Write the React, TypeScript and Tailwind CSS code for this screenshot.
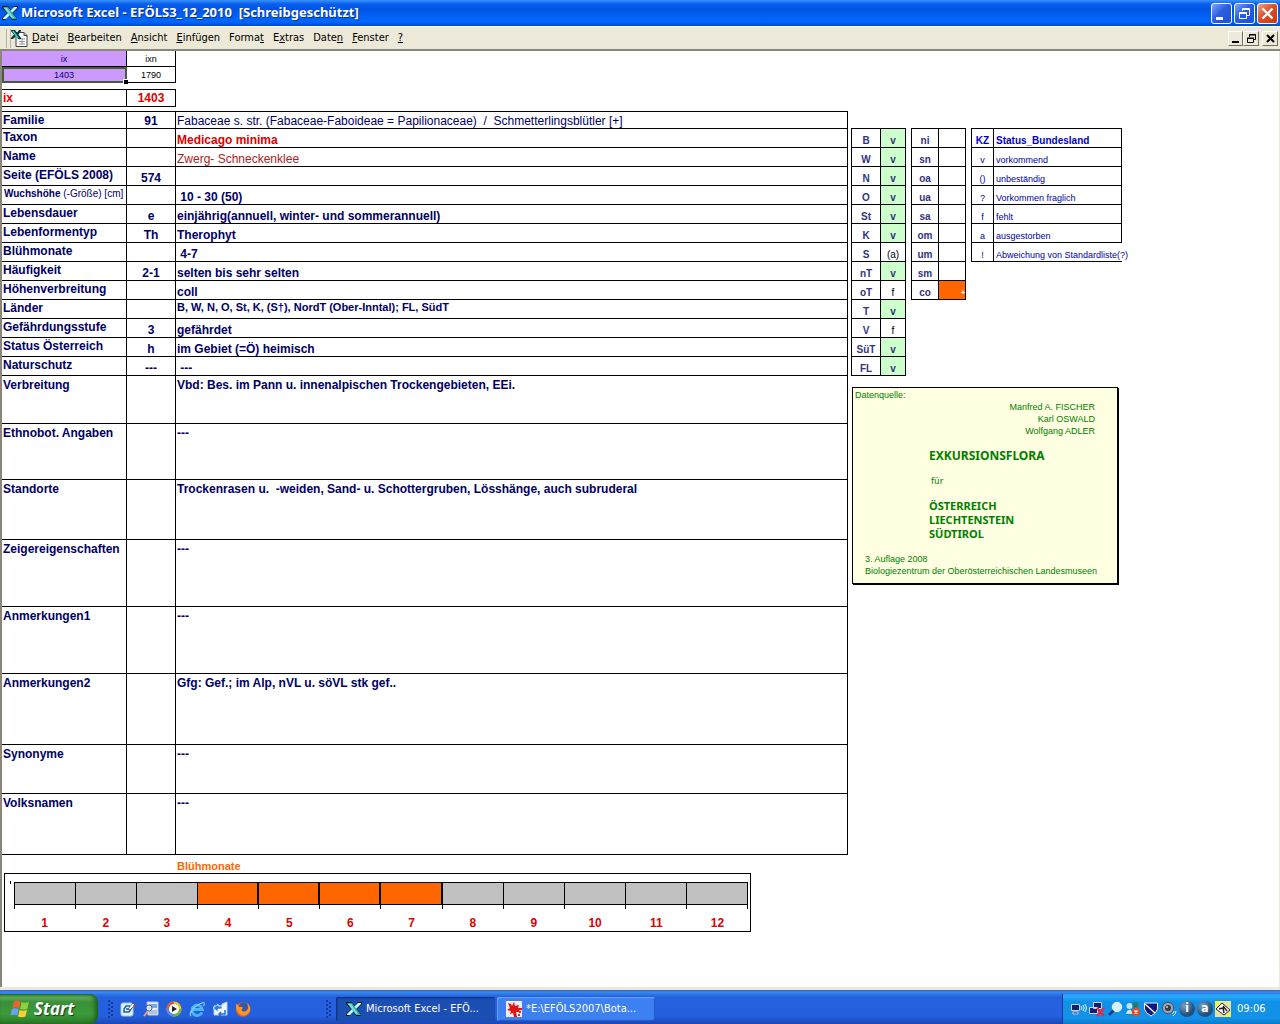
import React from "react";

type Field = {
  label: string;
  code?: string;
  value: string;
  height: string;
  valueClass?: string;
};

const fields: Field[] = [
  {
    label: "Familie",
    code: "91",
    value:
      "Fabaceae s. str. (Fabaceae-Faboideae = Papilionaceae)  /  Schmetterlingsblütler [+]",
    height: "h-[17px]",
    valueClass: "font-normal",
  },
  {
    label: "Taxon",
    value: "Medicago minima",
    height: "h-[19px]",
    valueClass: "text-[#e00000]",
  },
  {
    label: "Name",
    value: "Zwerg- Schneckenklee",
    height: "h-[19px]",
    valueClass: "font-normal text-[#b02020]",
  },
  { label: "Seite (EFÖLS 2008)", code: "574", value: "", height: "h-[19px]" },
  { label: "Wuchshöhe", value: " 10 - 30 (50)", height: "h-[19px]" },
  {
    label: "Lebensdauer",
    code: "e",
    value: "einjährig(annuell, winter- und sommerannuell)",
    height: "h-[19px]",
  },
  { label: "Lebenformentyp", code: "Th", value: "Therophyt", height: "h-[19px]" },
  { label: "Blühmonate", value: " 4-7", height: "h-[19px]" },
  {
    label: "Häufigkeit",
    code: "2-1",
    value: "selten bis sehr selten",
    height: "h-[19px]",
  },
  { label: "Höhenverbreitung", value: "coll", height: "h-[19px]" },
  {
    label: "Länder",
    value: "B, W, N, O, St, K, (S†), NordT (Ober-Inntal); FL, SüdT",
    height: "h-[19px]",
    valueClass: "text-[11px] align-top",
  },
  { label: "Gefährdungsstufe", code: "3", value: "gefährdet", height: "h-[19px]" },
  {
    label: "Status Österreich",
    code: "h",
    value: "im Gebiet (=Ö) heimisch",
    height: "h-[19px]",
  },
  { label: "Naturschutz", code: "---", value: " ---", height: "h-[19px]" },
];

const notes: Field[] = [
  {
    label: "Verbreitung",
    value: "Vbd: Bes. im Pann u. innenalpischen Trockengebieten, EEi.",
    height: "h-[48px]",
  },
  { label: "Ethnobot. Angaben", value: "---", height: "h-[56px]" },
  {
    label: "Standorte",
    value:
      "Trockenrasen u.  -weiden, Sand- u. Schottergruben, Lösshänge, auch subruderal",
    height: "h-[60px]",
  },
  { label: "Zeigereigenschaften", value: "---", height: "h-[67px]" },
  { label: "Anmerkungen1", value: "---", height: "h-[67px]" },
  {
    label: "Anmerkungen2",
    value: "Gfg: Gef.; im Alp, nVL u. söVL stk gef..",
    height: "h-[71px]",
  },
  { label: "Synonyme", value: "---", height: "h-[49px]" },
  { label: "Volksnamen", value: "---", height: "h-[61px]" },
];

const states = [
  ["B", "v"],
  ["W", "v"],
  ["N", "v"],
  ["O", "v"],
  ["St", "v"],
  ["K", "v"],
  ["S", "(a)"],
  ["nT", "v"],
  ["oT", "f"],
  ["T", "v"],
  ["V", "f"],
  ["SüT", "v"],
  ["FL", "v"],
];

const levels = ["ni", "sn", "oa", "ua", "sa", "om", "um", "sm", "co"];

const legend = [
  ["v", "vorkommend"],
  ["()", "unbeständig"],
  ["?", "Vorkommen fraglich"],
  ["f", "fehlt"],
  ["a", "ausgestorben"],
  ["!", "Abweichung von Standardliste(?)"],
];

const months = [1, 2, 3, 4, 5, 6, 7, 8, 9, 10, 11, 12];

const menus = [
  ["", "D", "atei"],
  ["", "B", "earbeiten"],
  ["", "A", "nsicht"],
  ["", "E", "infügen"],
  ["Forma", "t", ""],
  ["E", "x", "tras"],
  ["Date", "n", ""],
  ["", "F", "enster"],
  ["", "?", ""],
];

const ExcelIcon = () => (
  <svg width="16" height="16" viewBox="0 0 16 16" className="shrink-0">
    <path d="M0 1h6l3 4 3-4h4v2l-5 5 4 5v2h-5l-3-4-4 4H0v-2l5-5-5-5z" fill="#001c1c" />
    <path d="M12 2h3v1L4 14H1v-1z" fill="#c8f6f2" />
    <path d="M1 2h5l9 12h-5z" fill="#2fb0ac" />
    <path d="M2 3h3l7 10h-2z" fill="#7fe0da" />
  </svg>
);

const SheetIcon = () => (
  <svg width="17" height="17" viewBox="0 0 17 17" className="shrink-0">
    <path d="M5 2.500h8l3 3v11H5z" fill="#fff" stroke="#404040" />
    <path d="M13 2.500v3h3" fill="#ccc" stroke="#404040" />
    <path d="M8 9h6M8 11.500h6M8 14h6M11 8v7" stroke="#9a9a9a" />
    <path d="M0 0h4l2 3 2-3h2v1L7.500 4.500 10 8v1H7L5 6 2 9H0V8l3-3.500L0 1z" fill="#003c3c" />
    <path d="M1 1h2l5 7H6z" fill="#3cc6c0" />
  </svg>
);

const Minimize = () => (
  <svg width="19" height="19" viewBox="0 0 19 19">
    <path d="M4 13h7v3H4z" fill="#fff" />
  </svg>
);

const Restore = () => (
  <svg width="19" height="19" viewBox="0 0 19 19" fill="none" stroke="#fff">
    <path d="M7.500 7V4.500h7v7H12M7 5.500h8" />
    <path d="M4.500 8.500h7v6h-7zM4 9.500h8" />
  </svg>
);

const Close = () => (
  <svg width="19" height="19" viewBox="0 0 19 19" fill="none" stroke="#fff" strokeWidth="2.400">
    <path d="m4.500 4.500 10 10m0-10-10 10" />
  </svg>
);

const captionButton =
  "w-[21px] h-[21px] rounded-[3px] border border-white flex items-center justify-center overflow-hidden";
const childButton =
  "h-[15px] bg-[#ece9d8] border border-t-white border-l-white border-r-[#716f64] border-b-[#716f64] flex items-center justify-center";

const TitleBar = () => (
  <header className="h-[26px] shrink-0 flex items-center px-[2px] bg-[linear-gradient(180deg,#3a93ff_0px,#0a5fee_4px,#0054e3_9px,#0063f8_18px,#0066ff_22px,#0046c8_26px)]">
    <ExcelIcon />
    <h1 className="flex-1 ml-[3px] whitespace-pre text-white font-bold text-[13px] font-['Noto_Sans','Open_Sans',sans-serif] [text-shadow:1px_1px_0_#0a2f8f]">
      {"Microsoft Excel - EFÖLS3_12_2010  [Schreibgeschützt]"}
    </h1>
    <div className="flex gap-[2px]">
      <button
        aria-label="Minimieren"
        className={`${captionButton} bg-[linear-gradient(135deg,#7fa4f5,#2a5fe0_45%,#1c4fd8)]`}
      >
        <Minimize />
      </button>
      <button
        aria-label="Verkleinern"
        className={`${captionButton} bg-[linear-gradient(135deg,#7fa4f5,#2a5fe0_45%,#1c4fd8)]`}
      >
        <Restore />
      </button>
      <button
        aria-label="Schließen"
        className={`${captionButton} bg-[linear-gradient(135deg,#f0a58c,#dd4f2a_45%,#c8370f)]`}
      >
        <Close />
      </button>
    </div>
  </header>
);

const MenuBar = () => (
  <nav className="h-[25px] shrink-0 flex items-center pl-[6px] pr-[2px] bg-[#ece9d8] border-t border-t-white border-b-2 border-b-[#8a877a]">
    <div className="w-[5px] h-[19px] border-l border-r border-[#b5b2a0]" />
    <div className="mr-[4px]">
      <SheetIcon />
    </div>
    <div className="flex-1 flex gap-[9px] text-[11px] text-black font-['DejaVu_Sans_Condensed','Noto_Sans',sans-serif]">
      {menus.map(([before, key, after]) => (
        <button key={before + key + after}>
          {before}
          <span className="underline">{key}</span>
          {after}
        </button>
      ))}
    </div>
    <div className="flex">
      <button aria-label="Mappe minimieren" className={`${childButton} w-[15px]`}>
        <svg width="11" height="11" viewBox="0 0 11 11">
          <path d="M2 8h7v2H2z" />
        </svg>
      </button>
      <button aria-label="Mappe verkleinern" className={`${childButton} w-[16px]`}>
        <svg width="11" height="11" viewBox="0 0 11 11" fill="none" stroke="#000">
          <path d="M3.500 4V1.500h6v5H8M3 2h7M1.500 5.500h6v4h-6zM1 5h7" />
        </svg>
      </button>
      <button aria-label="Mappe schließen" className={`${childButton} w-[16px] ml-[3px]`}>
        <svg width="11" height="11" viewBox="0 0 11 11" stroke="#000" strokeWidth="2">
          <path d="m2 2 7 7m0-7L2 9" />
        </svg>
      </button>
    </div>
  </nav>
);

const IndexTables = () => (
  <>
    <table className="table-fixed border-separate border-spacing-0 w-[174px] text-[9px] leading-[10px] text-center">
      <colgroup>
        <col className="w-[125px]" />
        <col className="w-[49px]" />
      </colgroup>
      <tbody>
        <tr className="h-[16px]">
          <td className="p-0 bg-[#cc99ff] text-[#000080] border-r border-b border-black">ix</td>
          <td className="p-0 border-r border-b border-black">ixn</td>
        </tr>
        <tr className="h-[16px]">
          <td className="relative p-0 bg-[#cc99ff] text-[#000080] border-r border-b border-black outline-2 -outline-offset-2 outline-[#4a5a3c]">
            1403
            <span className="absolute right-[-2px] bottom-[-2px] w-[5px] h-[5px] bg-black border-t border-l border-white" />
          </td>
          <td className="p-0 border-r border-b border-black">1790</td>
        </tr>
      </tbody>
    </table>
    <table className="mt-[6px] table-fixed border-separate border-spacing-0 w-[174px] text-[#e00000] font-bold leading-[14px]">
      <colgroup>
        <col className="w-[125px]" />
        <col className="w-[49px]" />
      </colgroup>
      <tbody>
        <tr className="h-[18px]">
          <th scope="row" className="p-0 pl-px text-left text-[12px] border border-l-0 border-black">
            ix
          </th>
          <td className="p-0 text-center text-[12px] border border-l-0 border-black">1403</td>
        </tr>
      </tbody>
    </table>
  </>
);

const TaxonTable = () => (
  <table className="mt-[4px] w-full table-fixed border-separate border-spacing-0 border-t border-black text-[12px] leading-[14px] font-bold text-[#000066]">
    <colgroup>
      <col className="w-[125px]" />
      <col className="w-[49px]" />
      <col />
    </colgroup>
    <tbody>
      {fields.map((f) => (
        <tr key={f.label} className={f.height}>
          <th
            scope="row"
            className="p-0 pt-px pl-px text-left align-top whitespace-nowrap border-r border-b border-black"
          >
            {f.label === "Wuchshöhe" ? (
              <span className="block pl-px text-[10px]">
                {f.label} <span className="font-normal">(-Größe) [cm]</span>
              </span>
            ) : (
              f.label
            )}
          </th>
          <td className="p-0 text-center align-bottom border-r border-b border-black">
            {f.code}
          </td>
          <td
            className={`p-0 pl-px align-bottom whitespace-pre border-r border-b border-black ${
              f.valueClass ?? ""
            }`}
          >
            {f.value}
          </td>
        </tr>
      ))}
      {notes.map((n) => (
        <tr key={n.label} className={n.height}>
          <th
            scope="row"
            className="p-0 pt-[2px] pl-px text-left align-top whitespace-nowrap border-r border-b border-black"
          >
            {n.label}
          </th>
          <td className="p-0 border-r border-b border-black" />
          <td className="p-0 pt-[2px] pl-px align-top whitespace-pre border-r border-b border-black">
            {n.value}
          </td>
        </tr>
      ))}
    </tbody>
  </table>
);

const MonthChart = () => (
  <section>
    <h2 className="mt-[4px] pl-[175px] text-[11px] leading-[14px] font-bold text-[#ff6600]">
      Blühmonate
    </h2>
    <div className="relative ml-[2px] max-w-[747px] h-[59px] border border-black pt-[8px] pl-[9px] pr-[2px]">
      <span className="absolute left-[5px] top-[7px] w-px h-[3px] bg-black" />
      <div className="grid grid-cols-12 border-r border-black">
        {months.map((m) => (
          <div
            key={m}
            className={`h-[23px] border-t border-b border-l border-black ${
              m >= 4 && m <= 7 ? "bg-[#ff6600]" : "bg-[#c0c0c0]"
            } ${m >= 4 && m <= 7 ? "border-r" : ""}`}
          />
        ))}
      </div>
      <div className="grid grid-cols-12 border-r border-black h-[4px]">
        {months.map((m) => (
          <div key={m} className="border-l border-black" />
        ))}
      </div>
      <div className="grid grid-cols-12 mt-[7px] text-center text-[12px] leading-[14px] font-bold text-[#e00000]">
        {months.map((m) => (
          <div key={m}>{m}</div>
        ))}
      </div>
    </div>
  </section>
);

const StatusTables = () => (
  <div className="flex items-start gap-[5px] text-[10px] leading-[12px]">
    <table className="table-fixed border-separate border-spacing-0 border-t border-l border-black w-[55px] text-center font-bold text-[#333380]">
      <colgroup>
        <col className="w-[29px]" />
        <col className="w-[25px]" />
      </colgroup>
      <tbody>
        {states.map(([name, value]) => (
          <tr key={name} className="h-[19px]">
            <th scope="row" className="p-0 align-bottom border-r border-b border-black">
              {name}
            </th>
            <td
              className={`p-0 align-bottom border-r border-b border-black ${
                value === "v" ? "bg-[#ccffcc]" : "font-normal text-black"
              }`}
            >
              {value}
            </td>
          </tr>
        ))}
      </tbody>
    </table>

    <table className="table-fixed border-separate border-spacing-0 border-t border-l border-black w-[55px] text-center font-bold text-[#333380]">
      <colgroup>
        <col className="w-[27px]" />
        <col className="w-[27px]" />
      </colgroup>
      <tbody>
        {levels.map((level) => (
          <tr key={level} className="h-[19px]">
            <th scope="row" className="p-0 align-bottom border-r border-b border-black">
              {level}
            </th>
            <td
              className={`p-0 align-bottom border-r border-b border-black ${
                level === "co" ? "bg-[#ff6600] text-right text-[7px] text-white" : ""
              }`}
            >
              {level === "co" ? "+" : ""}
            </td>
          </tr>
        ))}
      </tbody>
    </table>

    <table className="table-fixed border-separate border-spacing-0 border-t border-l border-black w-[151px] text-[#0000aa]">
      <colgroup>
        <col className="w-[22px]" />
        <col className="w-[128px]" />
      </colgroup>
      <thead>
        <tr className="h-[19px] text-[#0000cc]">
          <th className="p-0 align-bottom border-r border-b border-black">KZ</th>
          <th className="p-0 pl-[2px] text-left align-bottom border-r border-b border-black">
            Status_Bundesland
          </th>
        </tr>
      </thead>
      <tbody>
        {legend.map(([sign, text]) => (
          <tr key={sign} className="h-[19px] text-[9px]">
            <td className="p-0 text-center align-bottom border-r border-b border-black">{sign}</td>
            <td
              className={`p-0 pl-[2px] align-bottom whitespace-nowrap border-b border-black ${
                sign === "!" ? "" : "border-r"
              }`}
            >
              {text}
            </td>
          </tr>
        ))}
      </tbody>
    </table>
  </div>
);

const SourceBox = () => (
  <aside className="mt-[11px] ml-px w-[266px] h-[197px] bg-[#ffffe1] border border-black shadow-[1px_1px_0_#000] text-[#008000] text-[9px] leading-[12px] pt-px">
    <p className="pl-[2px]">Datenquelle:</p>
    <p className="pr-[22px] text-right">
      Manfred A. FISCHER
      <br />
      Karl OSWALD
      <br />
      Wolfgang ADLER
    </p>
    <div className="pl-[76px] font-['Noto_Sans','Open_Sans',sans-serif] font-bold text-[11px] leading-[14px]">
      <p className="mt-[12px] text-[12px]">EXKURSIONSFLORA</p>
      <p className="my-[12px] pl-[2px] font-normal text-[9px] leading-[12px]">für</p>
      <p>
        ÖSTERREICH
        <br />
        LIECHTENSTEIN
        <br />
        SÜDTIROL
      </p>
    </div>
    <p className="mt-[12px] pl-[12px] whitespace-nowrap">
      3. Auflage 2008
      <br />
      Biologiezentrum der Oberösterreichischen Landesmuseen
    </p>
  </aside>
);

const Grip = () => (
  <svg width="6" height="20" viewBox="0 0 6 20" fill="#123a9c" className="shrink-0">
    <path d="M0 1h2v2H0zM0 5h2v2H0zM0 9h2v2H0zM0 13h2v2H0zM0 17h2v2H0zM3 3h2v2H3zM3 7h2v2H3zM3 11h2v2H3zM3 15h2v2H3z" />
  </svg>
);

const WindowsFlag = () => (
  <svg width="20" height="20" viewBox="0 0 20 20" className="shrink-0">
    <path d="M4 2.500q3-2 6.500 0L9 9Q5.500 7.500 2.300 9z" fill="#f0622c" />
    <path d="M11.500 3q3 1.500 7.500 0L17.200 10q-3.500 1-7.200 0z" fill="#8cd03c" />
    <path d="M2 10q3-1.500 6.700 0l-1.500 6.500q-3-1.500-6.700 0z" fill="#6ba0f8" />
    <path d="M9.600 11q3.500 1.500 7.400 0l-1.600 6.500q-4 1.500-7.400 0z" fill="#ffd034" />
  </svg>
);

const quickIcons = [
  {
    title: "Desktop anzeigen",
    icon: (
      <>
        <rect x="1" y="2" width="12" height="13" rx="2" fill="#e4f4ff" stroke="#9accf4" />
        <path d="M10 5H6L4 8v3h5l2-3H6" fill="none" stroke="#1f5fa8" strokeWidth="1.500" />
        <path d="m8 8 5-6 2 2-5 5z" fill="#fff" stroke="#1c3f7c" strokeWidth=".7" />
        <circle cx="14.500" cy="5" r="1.300" fill="#c0401c" />
      </>
    ),
  },
  {
    title: "Suche",
    icon: (
      <>
        <path d="M4 1h11v13H5z" fill="#e8eef8" stroke="#b8c4dc" />
        <path d="M6 3h8v4H6z" fill="#78a8ec" />
        <path d="M6 10h8M6 12h8" stroke="#7f98c8" />
        <circle cx="6" cy="7" r="3" fill="#cfe6ff" stroke="#5a6a90" />
        <path d="m5 10-4 5" stroke="#f0a070" strokeWidth="2" />
      </>
    ),
  },
  {
    title: "Media Player",
    icon: (
      <>
        <circle cx="8" cy="8" r="7.500" fill="#f6c21c" />
        <path d="M8 8V.5A7.500 7.500 0 0 0 .5 8z" fill="#e8582c" />
        <path d="M8 8H.5A7.500 7.500 0 0 0 8 15.500z" fill="#4c8ce8" />
        <path d="M8 8v7.500A7.500 7.500 0 0 0 15.500 8z" fill="#68b83c" />
        <circle cx="8" cy="8" r="5" fill="#fff" />
        <path d="M6 5v6l5-3z" fill="#222" />
      </>
    ),
  },
  {
    title: "Internet Explorer",
    icon: (
      <>
        <path d="M13 11.500A5.200 5.200 0 1 1 13.400 8.500H4" fill="none" stroke="#4cb8fc" strokeWidth="2.800" />
        <path d="M2 15C-1 12 6 4 14 1.500c2 0 1.500 2 .5 3.500" fill="none" stroke="#8cd0ff" strokeWidth="1.200" />
      </>
    ),
  },
  {
    title: "Outlook",
    icon: (
      <>
        <path d="M2 5h8V3l5-2v13H2z" fill="#f2f8ff" stroke="#b0ccf0" />
        <path d="M1 7 6 3v2h4v3H6v3z" fill="#2c80dc" stroke="#fff" strokeWidth=".7" />
        <path d="M13 9v4H7M9 11l-2 2 2 2" fill="none" stroke="#2c70c8" strokeWidth="1.500" />
      </>
    ),
  },
  {
    title: "Firefox",
    icon: (
      <>
        <circle cx="8" cy="8.500" r="7.300" fill="#e0601c" />
        <circle cx="8.500" cy="6" r="4.500" fill="#3458a8" />
        <path d="M1 3q2 0 3 3 3-1 4 1-2 1-1 3 4 2 6-2 1-3-1-6 4 3 3 8-4 6-9 4-6-4-5-11z" fill="#f8962c" />
      </>
    ),
  },
];

const trayIcons = [
  {
    title: "Drahtlos",
    icon: (
      <>
        <path d="M.5 3.500h8v6h-8zM2 11h5v2H2z" fill="#14206c" stroke="#c8d4ec" />
        <path d="M10 5q2 2 0 4M12 4q2.500 3 0 6M14 3q3 4 0 8" fill="none" stroke="#dff0ff" />
      </>
    ),
  },
  {
    title: "Netzwerk getrennt",
    icon: (
      <>
        <path d="M4.500 1.500h8v6h-8zM.5 6.500h8v6h-8z" fill="#14206c" stroke="#c8d4ec" />
        <path d="m8 7 7 8m0-8-7 8" stroke="#e8283c" strokeWidth="2.200" />
      </>
    ),
  },
  {
    title: "Lupe",
    icon: (
      <>
        <path d="m7 9-5 5" stroke="#203a80" strokeWidth="2.500" />
        <circle cx="10" cy="6" r="4.700" fill="#d4f0ff" stroke="#f4faff" />
      </>
    ),
  },
  {
    title: "Messenger",
    icon: (
      <>
        <circle cx="4.500" cy="5" r="3" fill="#bfe4f0" />
        <circle cx="10.500" cy="4" r="3" fill="#208068" />
        <path d="M1 14q1-8 6-5l5-3 3 5v3z" fill="#287f86" />
        <path d="M1 13q1-5 5-4l2 4z" fill="#c4e8f0" />
        <circle cx="11" cy="11" r="4.200" fill="#e04c28" />
        <path d="m9.500 9.500 3 3m0-3-3 3" stroke="#fff" strokeWidth="1.400" />
      </>
    ),
  },
  {
    title: "Virenschutz",
    icon: (
      <>
        <path d="M1.500 2h13v6q-1 4-6.500 7-5.500-3-6.500-7z" fill="#10187c" stroke="#e8f0ff" />
        <path d="m2 3 10 9" stroke="#fff" strokeWidth="1.300" />
      </>
    ),
  },
  {
    title: "Lautstärke",
    icon: (
      <>
        <circle cx="7" cy="7" r="5.700" fill="#9aa4b4" stroke="#46505e" />
        <circle cx="7" cy="7" r="3" fill="#343c48" />
        <circle cx="6" cy="6" r="1" fill="#c8d0dc" />
        <path d="M11 13q2-1 2-3M12 15q3-2 3-5" fill="none" stroke="#dff0ff" />
      </>
    ),
  },
];

const TrayBadge = ({ letter }: { letter: string }) => (
  <span className="w-[16px] h-[16px] rounded-full bg-[radial-gradient(circle_at_35%_30%,#7fa0c0,#24507c_60%)] text-white text-[12px] leading-[15px] font-bold text-center">
    {letter}
  </span>
);

const Taskbar = () => (
  <footer className="h-[34px] shrink-0 flex items-stretch text-white text-[11px] font-['DejaVu_Sans_Condensed','Noto_Sans',sans-serif] bg-[linear-gradient(180deg,#2a62c8_0px,#3b8bf0_2px,#2f79e6_4px,#2560dc_7px,#2460de_26px,#1c46b4_34px)]">
    <button className="mt-[4px] w-[98px] shrink-0 flex items-center pl-[10px] gap-[4px] rounded-r-[8px] bg-[linear-gradient(180deg,#2c7c2c_0px,#5fae5c_3px,#3c8f3a_8px,#3a9a38_20px,#2c7a2a_30px)] shadow-[inset_-3px_0_4px_#1f5f1f]">
      <WindowsFlag />
      <span className="italic font-bold text-[17px] leading-[20px] font-['Open_Sans','Noto_Sans',sans-serif] [text-shadow:1px_1px_1px_#1c3c1c]">
        Start
      </span>
    </button>
    <div className="flex items-center pt-[4px] pl-[10px]">
      <Grip />
      <div className="flex gap-[7px] ml-[6px] w-[206px]">
        {quickIcons.map((q) => (
          <button key={q.title} title={q.title}>
            <svg width="16" height="16" viewBox="0 0 16 16">
              {q.icon}
            </svg>
          </button>
        ))}
      </div>
      <Grip />
    </div>
    <div className="flex-1 flex gap-[2px] pl-[4px] pt-[7px] pb-[3px]">
      <button className="w-[159px] flex items-center gap-[4px] pl-[10px] rounded-[2px] bg-[#1c4fb4] shadow-[inset_1px_1px_2px_#0c2c7c]">
        <ExcelIcon />
        Microsoft Excel - EFÖ...
      </button>
      <button className="w-[158px] flex items-center gap-[4px] pl-[9px] rounded-[2px] bg-[#3c80f2] shadow-[inset_1px_1px_1px_#6ea4ff,inset_-1px_-1px_1px_#2458c0]">
        <svg width="16" height="16" viewBox="0 0 16 16" className="shrink-0">
          <path d="M0 0h16v16H0z" fill="#f4ecec" />
          <path d="M2 2l3 1 1 2 2-4 1 4 4-1-1 3h4v2h-3l2 3-3-1-2 0 1 5H8l-1-4-3 1 1-3-4-1 3-2z" fill="#e01414" />
          <path d="M13 10h2v2h-2zM12 13h2v2h-2z" fill="#d83030" />
        </svg>
        *E:\EFÖLS2007\Bota...
      </button>
    </div>
    <div className="mt-[4px] w-[218px] shrink-0 flex items-center gap-[2px] pl-[8px] border-l border-[#0c3c9c] bg-[linear-gradient(180deg,#1c9cf0_0px,#2aa8f8_2px,#1290e8_8px,#1292ea_24px,#0c78c8_30px)]">
      {trayIcons.map((t) => (
        <svg key={t.title} width="16" height="16" viewBox="0 0 16 16">
          <title>{t.title}</title>
          {t.icon}
        </svg>
      ))}
      <TrayBadge letter="i" />
      <TrayBadge letter="a" />
      <svg width="16" height="16" viewBox="0 0 16 16">
        <path d="M0 0h16v16H0z" fill="#e8e4a0" />
        <path d="M0 0h7L0 8zM16 16H9l7-7z" fill="#f4f04c" />
        <path d="m1 8 6-6 8 7-6 5z" fill="#fff" stroke="#222" />
        <path d="m4 8 4-1 1 5M8 5l4 5" fill="none" stroke="#222" strokeWidth="1.500" />
      </svg>
      <time className="ml-[4px]">09:06</time>
    </div>
  </footer>
);

const App = () => {
  return (
    <div className="min-h-screen flex flex-col bg-[#ece9d8] font-['Liberation_Sans',Arial,sans-serif] text-black">
      <TitleBar />
      <MenuBar />
      <main className="flex-1 flex items-start mb-[3px] mr-[1px] bg-white border-l-2 border-[#8a877a] overflow-hidden">
        <div className="flex-1 max-w-[846px]">
          <IndexTables />
          <TaxonTable />
          <MonthChart />
        </div>
        <div className="shrink-0 ml-[3px] pt-[77px]">
          <StatusTables />
          <SourceBox />
        </div>
      </main>
      <Taskbar />
    </div>
  );
};

export default App;
